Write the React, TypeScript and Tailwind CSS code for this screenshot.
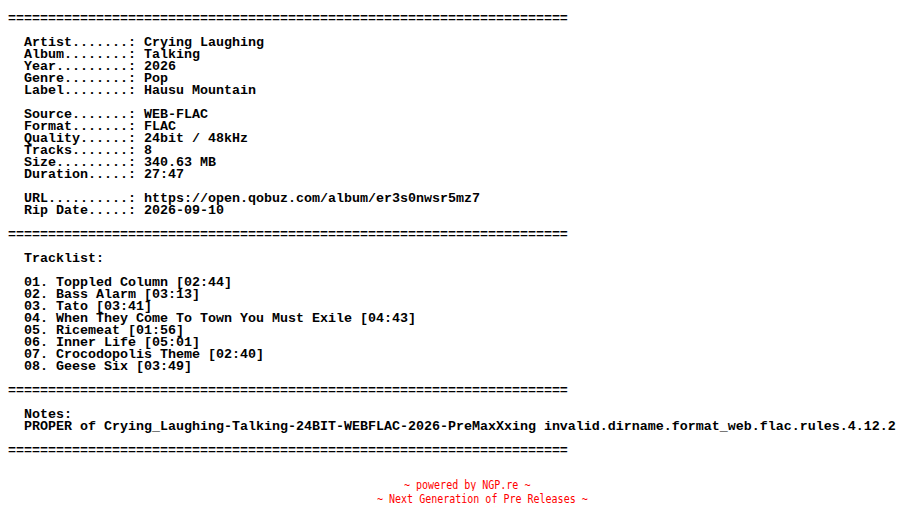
const RULE = "=".repeat(70);

const nfo = [
  RULE,
  "",
  "  Artist.......: Crying Laughing",
  "  Album........: Talking",
  "  Year.........: 2026",
  "  Genre........: Pop",
  "  Label........: Hausu Mountain",
  "",
  "  Source.......: WEB-FLAC",
  "  Format.......: FLAC",
  "  Quality......: 24bit / 48kHz",
  "  Tracks.......: 8",
  "  Size.........: 340.63 MB",
  "  Duration.....: 27:47",
  "",
  "  URL..........: https://open.qobuz.com/album/er3s0nwsr5mz7",
  "  Rip Date.....: 2026-09-10",
  "",
  RULE,
  "",
  "  Tracklist:",
  "",
  "  01. Toppled Column [02:44]",
  "  02. Bass Alarm [03:13]",
  "  03. Tato [03:41]",
  "  04. When They Come To Town You Must Exile [04:43]",
  "  05. Ricemeat [01:56]",
  "  06. Inner Life [05:01]",
  "  07. Crocodopolis Theme [02:40]",
  "  08. Geese Six [03:49]",
  "",
  RULE,
  "",
  "  Notes:",
  "  PROPER of Crying_Laughing-Talking-24BIT-WEBFLAC-2026-PreMaxXxing invalid.dirname.format_web.flac.rules.4.12.2",
  "",
  RULE,
].join("\n");

export default function App() {
  return (
    <main className="min-h-screen w-[904px] h-[528px] bg-white overflow-hidden">
      {/* NFO body */}
      <pre className="pl-2 pt-[13px] m-0 text-black font-bold text-[13.333px] leading-[12px] font-['Liberation_Mono',monospace] whitespace-pre">
        {nfo}
      </pre>

      {/* Footer */}
      <div className="mt-[21px] text-[#ff0000] text-[10px] leading-[14px] font-['DejaVu_Sans_Mono',monospace] whitespace-pre">
        <div className="pl-[404px] scale-y-[1.2] origin-center">~ powered by NGP.re ~</div>
        <div className="pl-[377px] scale-y-[1.2] origin-center">~ Next Generation of Pre Releases ~</div>
      </div>
    </main>
  );
}
